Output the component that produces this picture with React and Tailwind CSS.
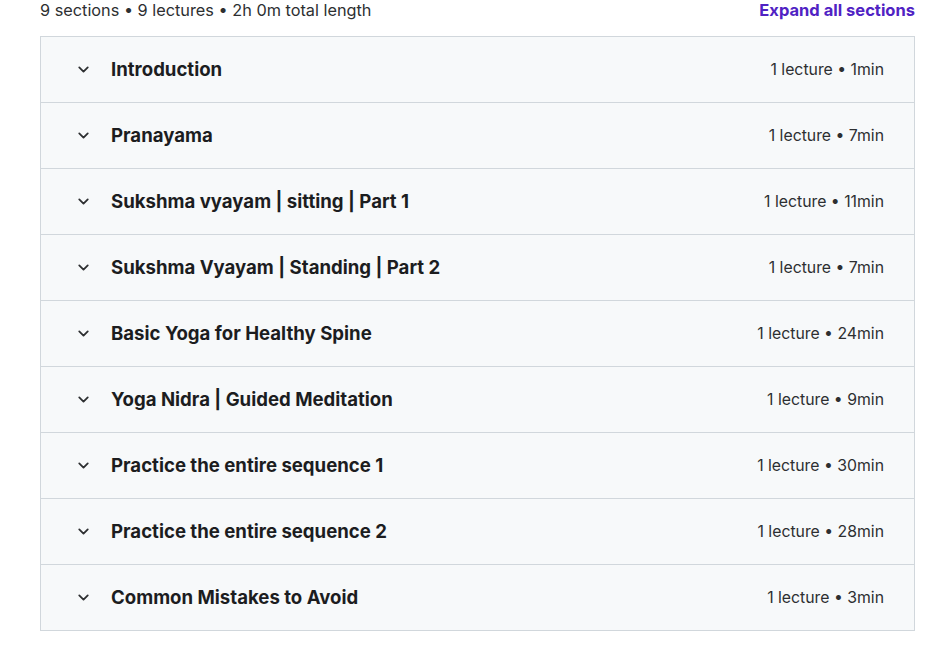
import { ChevronDown } from "lucide-react"

const sections = [
  { title: "Introduction", info: "1 lecture • 1min" },
  { title: "Pranayama", info: "1 lecture • 7min" },
  { title: "Sukshma vyayam | sitting | Part 1", info: "1 lecture • 11min" },
  { title: "Sukshma Vyayam | Standing | Part 2", info: "1 lecture • 7min" },
  { title: "Basic Yoga for Healthy Spine", info: "1 lecture • 24min" },
  { title: "Yoga Nidra | Guided Meditation", info: "1 lecture • 9min" },
  { title: "Practice the entire sequence 1", info: "1 lecture • 30min" },
  { title: "Practice the entire sequence 2", info: "1 lecture • 28min" },
  { title: "Common Mistakes to Avoid", info: "1 lecture • 3min" },
]

const App = () => {
  return (
    <div className="w-[929px] h-[656px] bg-white overflow-hidden font-['Inter',sans-serif] text-[#2d2f31]">
      <div className="pl-[40px] pr-[14px]">
        <div className="flex items-center justify-between h-[22px] -mt-[1px]">
          <span className="text-[16.3px] text-[#2d2f31]">
            9 sections • 9 lectures • 2h 0m total length
          </span>
          <button className="text-[16.5px] font-bold text-[#5022c3]">
            Expand all sections
          </button>
        </div>
        <div className="mt-[15px] border border-[#d1d7dc]">
          {sections.map((s, i) => (
            <div
              key={i}
              className={
                "flex items-center justify-between bg-[#f7f9fa] pl-[34px] pr-[30px]" +
                (i > 0 ? " h-[66px] border-t border-[#d1d7dc]" : " h-[65px]")
              }
            >
              <div className="flex items-center gap-[19px]">
                <ChevronDown size={17} strokeWidth={2.5} className="text-[#2d2f31]" />
                <span className="text-[18.6px] font-bold text-[#1c1d1f]">{s.title}</span>
              </div>
              <span className="text-[15.8px] text-[#2d2f31]">{s.info}</span>
            </div>
          ))}
        </div>
      </div>
    </div>
  )
}

export default App
